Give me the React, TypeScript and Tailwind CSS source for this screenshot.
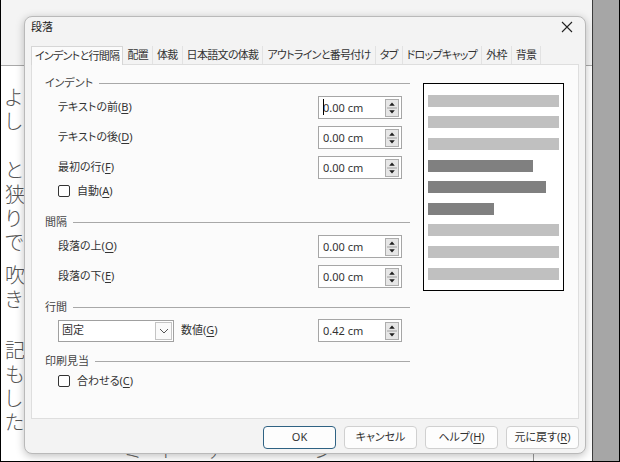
import React from 'react';

const uiFont = "[font-family:'Noto_Sans','Noto_Sans_CJK_JP',sans-serif] [font-feature-settings:'palt']";

const tabs = [
  'インデントと行間隔',
  '配置',
  '体裁',
  '日本語文の体裁',
  'アウトラインと番号付け',
  'タブ',
  'ドロップキャップ',
  '外枠',
  '背景',
];

const bars = [
  { cls: 'mt-0 w-[131px] bg-[#c0c0c0]' },
  { cls: 'mt-[9px] w-[131px] bg-[#c0c0c0]' },
  { cls: 'mt-[10px] w-[131px] bg-[#c0c0c0]' },
  { cls: 'mt-[10px] w-[105px] bg-[#808080]' },
  { cls: 'mt-[9px] w-[118px] bg-[#808080]' },
  { cls: 'mt-[10px] w-[66px] bg-[#808080]' },
  { cls: 'mt-[9px] w-[131px] bg-[#c0c0c0]' },
  { cls: 'mt-[10px] w-[131px] bg-[#c0c0c0]' },
  { cls: 'mt-[10px] w-[131px] bg-[#c0c0c0]' },
];

function Mnemonic({ text, k }: { text: string; k: string }) {
  return (
    <span>
      {text}(<span className="underline underline-offset-2">{k}</span>)
    </span>
  );
}

function SpinButtons() {
  return (
    <svg width="14" height="18" viewBox="0 0 14 18">
      <rect x="0.5" y="0.5" width="13" height="17" fill="#e6e6e6" stroke="#adadad" />
      <line x1="2" y1="9" x2="12" y2="9" stroke="#a0a0a0" />
      <path d="M7 3.5 L9.8 6.8 H4.2 Z" fill="#1e1e1e" />
      <path d="M7 14.5 L9.8 11.2 H4.2 Z" fill="#1e1e1e" />
    </svg>
  );
}

function SpinField({ value, caret }: { value: string; caret?: boolean }) {
  return (
    <div className="flex h-[23px] w-[84px] items-center border border-[#a6a6a6] bg-white pl-[4px] pr-[2px]">
      <span className="relative flex-1 text-[11px] leading-none text-[#333]">
        {caret && <span className="absolute left-0 top-[-3px] h-[16px] w-px bg-black" />}
        {value}
      </span>
      <SpinButtons />
    </div>
  );
}

function SectionHead({ label, className }: { label: string; className: string }) {
  return (
    <div className={`flex h-[18px] items-center text-[11px] text-[#444] ${className}`}>
      <span>{label}</span>
      <div className="ml-[6px] h-px flex-1 bg-[#a8a8a8]" />
    </div>
  );
}

function FieldRow({ label, k, value, className, caret }: { label: string; k: string; value: string; className: string; caret?: boolean }) {
  return (
    <div className={`flex h-[23px] items-center pl-[13px] pr-[8px] ${className}`}>
      <div className="flex-1 text-[11px] text-[#333]">
        <Mnemonic text={label} k={k} />
      </div>
      <SpinField value={value} caret={caret} />
    </div>
  );
}

function CheckRow({ label, k, className }: { label: string; k: string; className: string }) {
  return (
    <div className={`flex h-[18px] items-center pl-[13px] text-[11px] text-[#333] ${className}`}>
      <div className="h-[12px] w-[12px] rounded-[2px] border border-[#333] bg-white" />
      <span className="ml-[7px]">
        <Mnemonic text={label} k={k} />
      </span>
    </div>
  );
}

function DialogButton({ children, primary }: { children: React.ReactNode; primary?: boolean }) {
  return (
    <button
      className={`flex h-[23px] w-[73px] items-center justify-center rounded-[4px] border bg-[#fdfdfd] text-[11px] text-[#333] ${
        primary ? 'border-[#2f6283]' : 'border-[#d0d0d0]'
      }`}
    >
      {children}
    </button>
  );
}

function ParagraphDialog() {
  return (
    <div className="absolute left-[23px] top-[16px] flex h-[438px] w-[562px] flex-col rounded-[8px] border border-[#b9b9b9] bg-[#f3f3f3] shadow-[0_2px_8px_rgba(0,0,0,0.25)]">
      {/* title */}
      <div className="flex h-[29px] items-start justify-between pl-[6px] pr-[9px] pt-[1px]">
        <span className="text-[11px] leading-[18px] text-[#222]">段落</span>
        <svg width="18" height="18" viewBox="0 0 18 18">
          <path d="M4 4 L14 14 M14 4 L4 14" stroke="#222" strokeWidth="1.1" />
        </svg>
      </div>

      {/* tabs */}
      <div className="relative z-10 flex h-[19px] items-stretch whitespace-nowrap pl-[6px] text-[11px] tracking-[-0.7px] text-[#333]">
        {tabs.map((t, i) =>
          i === 0 ? (
            <div key={t} className="flex items-center border border-b-0 border-[#d6d6d6] bg-[#fbfbfb] px-[3px]">
              {t}
            </div>
          ) : (
            <div key={t} className="mb-px flex items-center border-r border-[#e2e2e2] px-[4px]">
              {t}
            </div>
          ),
        )}
      </div>

      {/* panel */}
      <div className="-mt-px mx-[6px] flex h-[355px] items-start border border-[#dedede] bg-[#fbfbfb]">
        <div className="flex w-[378px] flex-col pl-[13px] pt-[9px]">
          <SectionHead label="インデント" className="" />
          <FieldRow label="テキストの前" k="B" value="0.00 cm" className="mt-[4px]" caret />
          <FieldRow label="テキストの後" k="D" value="0.00 cm" className="mt-[7px]" />
          <FieldRow label="最初の行" k="F" value="0.00 cm" className="mt-[7px]" />
          <CheckRow label="自動" k="A" className="mt-[3px]" />

          <SectionHead label="間隔" className="mt-[13px]" />
          <FieldRow label="段落の上" k="O" value="0.00 cm" className="mt-[4px]" />
          <FieldRow label="段落の下" k="E" value="0.00 cm" className="mt-[7px]" />

          <SectionHead label="行間" className="mt-[10px]" />
          <div className="mt-[3px] flex h-[23px] items-center pl-[13px] pr-[8px] text-[11px] text-[#333]">
            <div className="flex h-[22px] w-[116px] items-center justify-between border border-[#a0a0a0] bg-white pl-[3px] pr-[1px]">
              <span>固定</span>
              <div className="flex h-[18px] w-[17px] items-center justify-center border border-[#c4c4c4] bg-[#fafafa]">
                <svg width="10" height="6" viewBox="0 0 10 6">
                  <path d="M1 1 L5 5 L9 1" fill="none" stroke="#555" strokeWidth="1" />
                </svg>
              </div>
            </div>
            <span className="ml-[7px] flex-1">
              <Mnemonic text="数値" k="G" />
            </span>
            <SpinField value="0.42 cm" />
          </div>

          <SectionHead label="印刷見当" className="mt-[10px]" />
          <CheckRow label="合わせる" k="C" className="mt-[2px]" />
        </div>

        <div className="ml-[13px] mt-[18px] flex h-[208px] w-[141px] flex-col border border-black bg-white pl-[4px] pt-[11px]">
          {bars.map((b, i) => (
            <div key={i} className={`h-[12px] shrink-0 ${b.cls}`} />
          ))}
        </div>
      </div>

      {/* buttons */}
      <div className="mt-[7px] flex justify-end gap-[8px] pr-[6px]">
        <DialogButton primary>OK</DialogButton>
        <DialogButton>キャンセル</DialogButton>
        <DialogButton>
          <Mnemonic text="ヘルプ" k="H" />
        </DialogButton>
        <DialogButton>
          <Mnemonic text="元に戻す" k="R" />
        </DialogButton>
      </div>
    </div>
  );
}

function DocumentPage() {
  const groups = [
    { chars: ['よ', 'し'], cls: 'mt-[20px]' },
    { chars: ['と', '狭', 'り', 'で'], cls: 'mt-[25px]' },
    { chars: ['吹', 'き'], cls: 'mt-[9px]' },
    { chars: ['記', 'も', 'し', 'た'], cls: 'mt-[27px]' },
  ];
  return (
    <div className="flex flex-1 flex-col">
      <div className="h-[79px] border-b border-[#a9a9a9] bg-[#f4f4f4]" />
      <div className="flex flex-1 flex-col bg-white pl-[4px] text-[20px] font-light leading-[24px] text-[#555]">
        {groups.map((g, i) => (
          <div key={i} className={`flex flex-col ${g.cls}`}>
            {g.chars.map((c, j) => (
              <span key={j}>{c}</span>
            ))}
          </div>
        ))}
        <div className="mt-[6px] flex h-[20px] items-start text-[20px] leading-[20px] text-[#666]">
          <span className="ml-[80px]">ー</span>
          <span className="ml-[20px]">ミ</span>
          <span className="ml-[20px]">ト</span>
          <span className="ml-[30px]">テ</span>
          <span className="ml-[30px]">゛</span>
          <span className="ml-[40px]">ン</span>
          <div className="ml-[200px] h-[20px] border-l border-[#999]" />
        </div>
      </div>
    </div>
  );
}

export default function App() {
  return (
    <div className={`relative flex h-[462px] w-[620px] overflow-hidden border-x border-b border-black bg-white ${uiFont}`}>
      <DocumentPage />
      <div className="w-[27px] border-l border-[#3c3c3c] bg-[#a6a6a6]" />
      <ParagraphDialog />
    </div>
  );
}
